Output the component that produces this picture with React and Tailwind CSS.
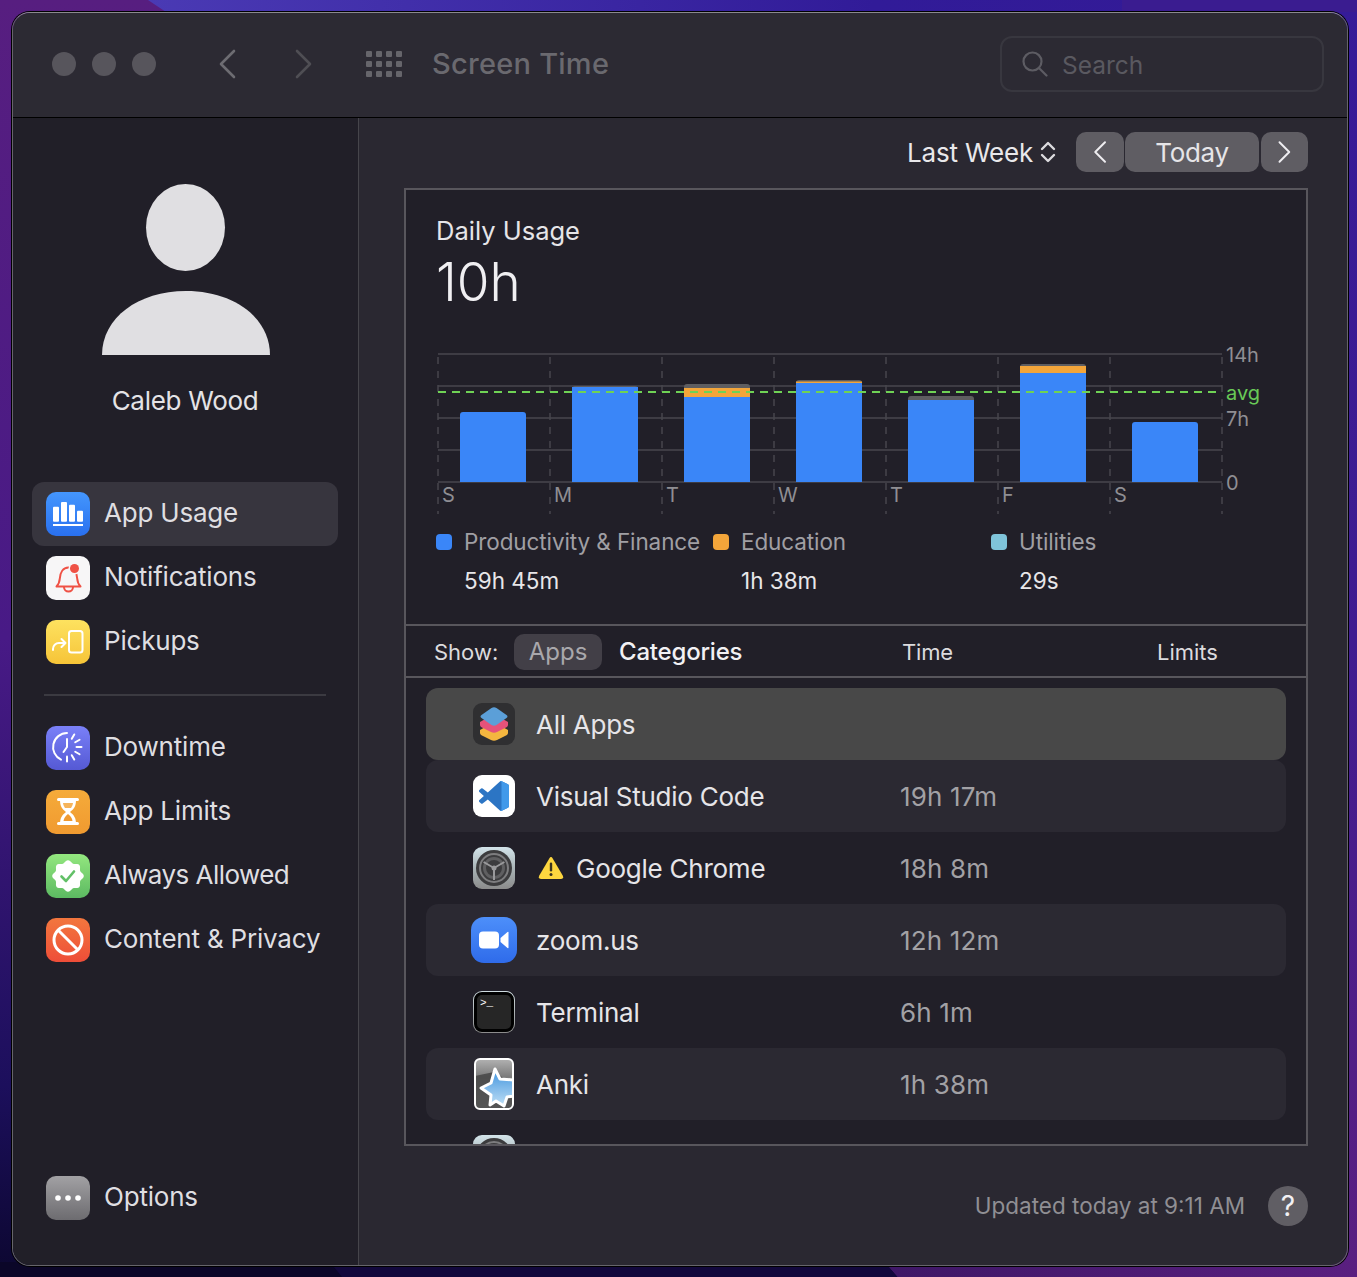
const font = { fontFamily: "Inter, 'Noto Sans', sans-serif" };

function Wallpaper() {
  return (
    <svg className="absolute inset-0" width="1357" height="1277" viewBox="0 0 1357 1277">
      <defs>
        <linearGradient id="wpTop" x1="0" x2="1" y1="0" y2="0">
          <stop offset="0" stopColor="#4a3ab4" />
          <stop offset="0.6" stopColor="#311b98" />
          <stop offset="1" stopColor="#341a96" />
        </linearGradient>
        <linearGradient id="wpLeft" x1="0" x2="0" y1="0" y2="1">
          <stop offset="0" stopColor="#571e80" />
          <stop offset="0.5" stopColor="#481a86" />
          <stop offset="0.85" stopColor="#1c0f5c" />
          <stop offset="1" stopColor="#0c0730" />
        </linearGradient>
        <linearGradient id="wpRight" x1="0" x2="0" y1="0" y2="1">
          <stop offset="0" stopColor="#351b98" />
          <stop offset="0.5" stopColor="#3f1c90" />
          <stop offset="1" stopColor="#5a1f80" />
        </linearGradient>
        <linearGradient id="wpBottom" x1="0" x2="1" y1="0" y2="0">
          <stop offset="0" stopColor="#3e1766" />
          <stop offset="1" stopColor="#5a1f80" />
        </linearGradient>
      </defs>
      <rect width="680" height="1277" fill="url(#wpLeft)" />
      <rect x="680" width="677" height="1277" fill="url(#wpRight)" />
      <path d="M148 0H1357V12H166Z" fill="url(#wpTop)" />
      <path d="M1122 0H1357V12H1122Z" fill="#3a1c90" />
      <path d="M0 1262H330L342 1277H0Z" fill="#0b0628" />
      <path d="M330 1262H885L898 1277H342Z" fill="#12083c" />
      <path d="M885 1262H1357V1277H898Z" fill="url(#wpBottom)" />
    </svg>
  );
}

function Chevron({ dir = "left", className = "", size = 24 }) {
  return (
    <svg width={size * 0.75} height={size + 8} viewBox="0 0 18 32" fill="none" stroke="currentColor" strokeWidth="2.6" strokeLinecap="round" strokeLinejoin="round" className={className}>
      {dir === "left" ? <path d="M16 3 3 16l13 13" /> : <path d="M2 3l13 13L2 29" />}
    </svg>
  );
}

function TitleBar() {
  return (
    <div className="flex h-[105px] shrink-0 items-center border-b border-black bg-[#2c2a33] pb-[3px] pl-[39px]">
      <div className="flex gap-4">
        <div className="h-6 w-6 rounded-full bg-[#57555c]" />
        <div className="h-6 w-6 rounded-full bg-[#57555c]" />
        <div className="h-6 w-6 rounded-full bg-[#57555c]" />
      </div>
      <Chevron className="ml-[62px] text-[#6d6c72]" />
      <Chevron dir="right" className="ml-[59px] text-[#4f4e54]" />
      <div className="ml-[53px] grid grid-cols-4 gap-x-[4px] gap-y-[4px]">
        {Array.from({ length: 12 }).map((_, i) => (
          <div key={i} className="h-[6px] w-[6px] rounded-[1px] bg-[#66656b]" />
        ))}
      </div>
      <div className="ml-[30px] text-[29px] font-medium tracking-[0.25px] text-[#6a696f]">Screen Time</div>
      <div className="ml-auto mr-[23px] flex h-[56px] w-[324px] items-center rounded-[12px] border-2 border-[#38373f] pl-[20px]">
        <svg width="26" height="26" viewBox="0 0 26 26" fill="none" stroke="#5d5c63" strokeWidth="2.2" strokeLinecap="round">
          <circle cx="10.5" cy="10.5" r="9" />
          <path d="m17 17 7.5 7.5" />
        </svg>
        <span className="ml-[14px] pt-[4px] text-[24.5px] text-[#5a5960]">Search</span>
      </div>
    </div>
  );
}

function Avatar() {
  return (
    <svg width="168" height="171" viewBox="0 0 168 171" className="ml-[70px] block shrink-0">
      <ellipse cx="83.5" cy="43.5" rx="39.5" ry="43.5" fill="#e0dfe2" />
      <path d="M0 171C0 134 36 107 84 107s84 27 84 64Z" fill="#e0dfe2" />
    </svg>
  );
}

function IconBox({ className, children }) {
  return (
    <div className={`flex h-11 w-11 shrink-0 items-center justify-center rounded-[10px] ${className}`}>
      <svg width="44" height="44" viewBox="0 0 44 44" fill="none">
        {children}
      </svg>
    </div>
  );
}

function UsageIcon() {
  return (
    <IconBox className="bg-linear-to-b from-[#4496fd] to-[#2a70ef]">
      <rect x="7" y="14.7" width="6" height="15" rx="1" fill="#fff" />
      <rect x="15" y="10" width="6" height="19.7" rx="1" fill="#fff" />
      <rect x="23" y="12.7" width="6" height="17" rx="1" fill="#fff" />
      <rect x="31" y="18.7" width="6" height="11" rx="1" fill="#fff" />
      <rect x="7" y="32" width="30" height="2" fill="#fff" />
    </IconBox>
  );
}

function NotifIcon() {
  return (
    <IconBox className="bg-[#f7f6f7]">
      <path d="M10.500 30.500h24c-2-2-3-4-3.300-8-.4-6-3.200-11-8.700-11s-8.300 5-8.700 11c-.3 4-1.300 6-3.300 8Z" stroke="#ef5145" strokeWidth="2" strokeLinejoin="round" />
      <path d="M18 31a4.500 4.500 0 0 0 9 0" stroke="#ef5145" strokeWidth="2" />
      <circle cx="28.500" cy="12.500" r="6" fill="#f7f6f7" />
      <circle cx="28.500" cy="12.500" r="4.500" fill="#ef5145" />
    </IconBox>
  );
}

function PickupIcon() {
  return (
    <IconBox className="bg-linear-to-b from-[#fde25f] to-[#f6c437]">
      <rect x="23" y="11" width="13.500" height="21.500" rx="2.500" stroke="#fff" strokeWidth="2" />
      <path d="M7 30v-1a6 6 0 0 1 6-6h6.500M15.500 19l4 4-4 4" stroke="#fff" strokeWidth="2" strokeLinecap="round" strokeLinejoin="round" />
    </IconBox>
  );
}

function DowntimeIcon() {
  const ticks = [30, 60, 90, 120, 150, 180].map((a) => {
    const r = (a * Math.PI) / 180;
    return {
      x1: 21 + Math.sin(r) * 9.500,
      y1: 21 - Math.cos(r) * 9.500,
      x2: 21 + Math.sin(r) * 14.500,
      y2: 21 - Math.cos(r) * 14.500,
    };
  });
  return (
    <IconBox className="bg-linear-to-b from-[#7a80f8] to-[#5559d4]">
      <path d="M21 7A14 14 0 0 0 15 33.600" stroke="#fff" strokeWidth="2" strokeLinecap="round" />
      <path d="M21 13v8l-3.500 5" stroke="#fff" strokeWidth="2" strokeLinecap="round" strokeLinejoin="round" />
      {ticks.map((t, i) => (
        <line key={i} {...t} stroke="#fff" strokeWidth="2" strokeLinecap="round" />
      ))}
    </IconBox>
  );
}

function LimitsIcon() {
  return (
    <IconBox className="bg-linear-to-b from-[#f5ab3a] to-[#f09a30]">
      <path d="M12.500 9.500h19M12.500 33.500h19" stroke="#fff" strokeWidth="3" strokeLinecap="round" />
      <path d="M14 10c0 6 2 9 6 12-4 3-6 6-6 12h16c0-6-2-9-6-12 4-3 6-6 6-12Z" fill="#fff" />
      <path d="M17.500 31c.3-3 2-5 4.500-7 2.500 2 4.200 4 4.500 7Z" fill="#f09a30" />
      <path d="M17 13h10c-.3 2-1 3.500-2 5h-6c-1-1.500-1.700-3-2-5Z" fill="#f6b45a" />
    </IconBox>
  );
}

function AllowedIcon() {
  const pts = [];
  for (let i = 0; i < 96; i++) {
    const a = (i / 96) * Math.PI * 2;
    const r = 14.500 + 1.300 * Math.cos(a * 8);
    pts.push(`${(22 + Math.sin(a) * r).toFixed(2)},${(22 - Math.cos(a) * r).toFixed(2)}`);
  }
  return (
    <IconBox className="bg-linear-to-b from-[#93e77f] to-[#5cba62]">
      <polygon points={pts.join(" ")} fill="#fff" />
      <path d="M15.500 22.500l4.500 4.500 8-9.500" stroke="#62c067" strokeWidth="2.600" strokeLinecap="round" strokeLinejoin="round" />
    </IconBox>
  );
}

function PrivacyIcon() {
  return (
    <IconBox className="bg-linear-to-b from-[#f2763e] to-[#ee4d38]">
      <circle cx="22" cy="22" r="14" stroke="#fff" strokeWidth="3" />
      <path d="m12 12 20 20" stroke="#fff" strokeWidth="3" />
    </IconBox>
  );
}

function OptionsIcon() {
  return (
    <IconBox className="bg-linear-to-b from-[#a2a1a4] to-[#6d6c70]">
      <circle cx="12" cy="22" r="2.800" fill="#fff" />
      <circle cx="22" cy="22" r="2.800" fill="#fff" />
      <circle cx="32" cy="22" r="2.800" fill="#fff" />
    </IconBox>
  );
}

function NavItem({ icon, label, active, className = "" }) {
  return (
    <div className={`flex h-16 items-center gap-[14px] rounded-[12px] pl-[14px] ${active ? "bg-[#37353e]" : ""}`}>
      {icon}
      <span className={`pb-1 text-[26px] text-[#dfdee1] ${className || "tracking-[-0.2px]"}`}>{label}</span>
    </div>
  );
}

function Sidebar() {
  return (
    <div className="flex w-[346px] shrink-0 flex-col border-r border-[#46454b] bg-[#211f28] pl-[19px] pr-5 pt-[66px]">
      <Avatar />
      <div className="mt-[30px] text-center text-[26px] leading-[32px] tracking-[-0.3px] text-[#e4e3e6]">Caleb Wood</div>
      <div className="mt-[65px]">
        <NavItem icon={<UsageIcon />} label="App Usage" active />
        <NavItem icon={<NotifIcon />} label="Notifications" />
        <NavItem icon={<PickupIcon />} label="Pickups" />
      </div>
      <div className="mx-3 my-5 h-[2px] shrink-0 bg-[#3b3a41]" />
      <div>
        <NavItem icon={<DowntimeIcon />} label="Downtime" />
        <NavItem icon={<LimitsIcon />} label="App Limits" />
        <NavItem icon={<AllowedIcon />} label="Always Allowed" className="tracking-[-0.55px]" />
        <NavItem icon={<PrivacyIcon />} label="Content & Privacy" />
      </div>
      <div className="mb-[35px] mt-auto">
        <NavItem icon={<OptionsIcon />} label="Options" />
      </div>
    </div>
  );
}

const bars = [
  { x: 460, top: 412 },
  { x: 572, top: 387, gray: 386 },
  { x: 684, top: 397, gray: 384, orange: 388 },
  { x: 796, top: 383, gray: 380, orange: 381.500 },
  { x: 908, top: 400, gray: 396 },
  { x: 1020, top: 373, gray: 364, orange: 366 },
  { x: 1132, top: 422 },
];
const days = ["S", "M", "T", "W", "T", "F", "S"];

function Chart() {
  const ox = 436;
  const oy = 344;
  return (
    <svg width="840" height="172" viewBox={`${ox} ${oy} 840 172`} className="block" style={font}>
      {[354, 386, 418, 450, 482].map((y) => (
        <line key={y} x1="438" x2="1222" y1={y} y2={y} stroke="#3e3c44" strokeWidth="2" />
      ))}
      {[438, 550, 662, 774, 886, 998, 1110, 1222].map((x) => (
        <line key={x} x1={x} x2={x} y1="357" y2="514" stroke="#47454c" strokeWidth="1.500" strokeDasharray="7 7" />
      ))}
      {bars.map((b, i) => (
        <g key={i}>
          {b.gray && <path d={`M${b.x} 400V${b.gray + 3}q0-3 3-3h60q3 0 3 3V400Z`} fill="#5e5d60" />}
          {b.orange && <rect x={b.x} y={b.orange} width="66" height={b.top - b.orange} fill="#f3a53a" />}
          {b.gray ? (
            <rect x={b.x} y={b.top} width="66" height={482 - b.top} fill="#3a86f8" />
          ) : (
            <path d={`M${b.x} 482V${b.top + 3}q0-3 3-3h60q3 0 3 3V482Z`} fill="#3a86f8" />
          )}
        </g>
      ))}
      <line x1="438" x2="1218" y1="392" y2="392" stroke="#6fd255" strokeWidth="2" strokeDasharray="8 6" />
      {days.map((d, i) => (
        <text key={i} x={442 + i * 112} y="502" fontSize="20" fill="#8f8e93">
          {d}
        </text>
      ))}
      <text x="1226" y="362" fontSize="20" fill="#8f8e93">14h</text>
      <text x="1226" y="400" fontSize="20" fill="#69c957">avg</text>
      <text x="1226" y="426" fontSize="20" fill="#8f8e93">7h</text>
      <text x="1226" y="490" fontSize="20" fill="#8f8e93">0</text>
    </svg>
  );
}

function LegendItem({ color, label, value }) {
  return (
    <div>
      <div className="flex items-center gap-3 whitespace-nowrap">
        <div className={`h-4 w-4 rounded-[4px] ${color}`} />
        <span className="text-[22.500px] leading-[28px] tracking-[-0.1px] text-[#a09fa4]">{label}</span>
      </div>
      <div className="mt-[11px] pl-7 text-[22.500px] leading-[28px] text-[#e7e6e9]">{value}</div>
    </div>
  );
}

function AllAppsIcon() {
  return (
    <div className="flex h-[42px] w-[42px] items-center justify-center rounded-[9px] bg-[#2f2f31]">
      <svg width="42" height="42" viewBox="0 0 42 42">
        <path d="M21 19 35 27v3q0 1.500-1.500 2.300L24 37q-3 1.500-6 0l-9.500-4.700Q7 31.500 7 30v-3Z" fill="#f4b63f" />
        <path d="M21 11 35 19v3q0 1.500-1.500 2.300L24 29q-3 1.500-6 0l-9.500-4.700Q7 23.500 7 22v-3Z" fill="#e6527a" />
        <path d="M18.500 5q2.500-1.500 5 0l10 7q2 1.500 0 3l-10 7q-2.500 1.500-5 0l-10-7q-2-1.500 0-3Z" fill="#5b9fd8" />
      </svg>
    </div>
  );
}

function VsCodeIcon() {
  return (
    <div className="flex h-[42px] w-[42px] items-center justify-center rounded-[9px] bg-white">
      <svg width="30" height="30" viewBox="0 0 100 100">
        <path d="M70.900 99.300a6.200 6.200 0 0 0 5-.2l20.600-9.900A6.250 6.250 0 0 0 100 83.600V16.400a6.250 6.250 0 0 0-3.500-5.600L75.900.9a6.200 6.200 0 0 0-7.100 1.200L29.400 38 12.200 25a4.200 4.200 0 0 0-5.300.2L1.400 30.200a4.200 4.200 0 0 0 0 6.200L16.300 50 1.400 63.600a4.200 4.200 0 0 0 0 6.200l5.500 5a4.200 4.200 0 0 0 5.300.2L29.400 62l39.400 35.900a6.200 6.200 0 0 0 2.100 1.400ZM75 27.300 45.100 50 75 72.700Z" fill="#2c75c4" />
        <path d="M71 99.300a6.200 6.200 0 0 0 4.900-.2l20.600-9.900A6.250 6.250 0 0 0 100 83.600V16.400a6.250 6.250 0 0 0-3.500-5.600L75.900.9a6.200 6.200 0 0 0-4.900-.2c2.500 1 4 3.200 4 5.600v87.400c0 2.400-1.500 4.600-4 5.600Z" fill="#4199ea" />
      </svg>
    </div>
  );
}

function GearIcon() {
  return (
    <div className="flex h-[42px] w-[42px] shrink-0 items-center justify-center rounded-[9px] bg-linear-to-b from-[#d3e4ea] via-[#a9b4b7] to-[#8b8b8b]">
      <svg width="38" height="38" viewBox="0 0 38 38" fill="none">
        <circle cx="19" cy="19" r="18" fill="#3c3c3e" />
        <circle cx="19" cy="19" r="14" stroke="#7d7d7f" strokeWidth="2" />
        <circle cx="19" cy="19" r="9.500" stroke="#5f5f61" strokeWidth="3" />
        <path d="M19 19V31M19 19 8.600 13M19 19 29.400 13" stroke="#9a9a9c" strokeWidth="2" />
        <circle cx="19" cy="19" r="2.500" fill="#9a9a9c" />
      </svg>
    </div>
  );
}

function ZoomIcon() {
  return (
    <div className="flex h-[46px] w-[46px] items-center justify-center rounded-[13px] bg-linear-to-b from-[#4d8ffa] to-[#2f6bea]">
      <svg width="30" height="18" viewBox="0 0 30 18">
        <rect width="20" height="17" y="0.500" rx="4" fill="#fff" />
        <path d="M21.500 7 28.500 1Q29.500.5 29.500 1.500V16.500Q29.500 17.500 28.500 17L21.500 11Z" fill="#fff" />
      </svg>
    </div>
  );
}

function TerminalIcon() {
  return (
    <div className="h-[42px] w-[42px] rounded-[9px] bg-linear-to-b from-[#cfdce0] to-[#8b8b8b] p-[1px]">
      <div className="h-full w-full rounded-[8px] border-[3px] border-black bg-[#262626] pl-[3px] pt-[1px]">
        <svg width="18" height="13" viewBox="0 0 18 13" className="block">
          <text x="0" y="10" fontSize="11" fill="#fff" fontFamily="Liberation Mono, monospace">&gt;_</text>
        </svg>
      </div>
    </div>
  );
}

function AnkiIcon() {
  return (
    <svg width="40" height="52" viewBox="0 0 40 52" className="block">
      <defs>
        <linearGradient id="ankiBg" x1="0" x2="0" y1="0" y2="1">
          <stop offset="0" stopColor="#b2b2b2" />
          <stop offset="0.35" stopColor="#7c7c7c" />
          <stop offset="1" stopColor="#9a9a9a" />
        </linearGradient>
        <linearGradient id="ankiStar" x1="0" x2="0" y1="0" y2="1">
          <stop offset="0" stopColor="#3f93de" />
          <stop offset="1" stopColor="#bfdff5" />
        </linearGradient>
        <clipPath id="ankiClip">
          <rect x="1" y="1" width="38" height="50" rx="5" />
        </clipPath>
      </defs>
      <rect x="1" y="1" width="38" height="50" rx="5" fill="url(#ankiBg)" />
      <g clipPath="url(#ankiClip)">
        <path d="M1 18 20 14 39 26V51H1Z" fill="#3e3e3e" opacity="0.75" />
        <path d="M21 11 26 21 40 22V38L33 39 30 48 22 43 16 47 17 37 7 30 17 25Z" fill="url(#ankiStar)" stroke="#fff" strokeWidth="3" strokeLinejoin="round" />
      </g>
      <rect x="1" y="1" width="38" height="50" rx="5" fill="none" stroke="#fff" strokeWidth="2" />
    </svg>
  );
}

function WarnIcon() {
  return (
    <svg width="26" height="24" viewBox="0 0 26 24" className="ml-[2px] mr-[12px] shrink-0">
      <path d="M11.300 2.500q1.700-2.800 3.400 0l10 17q1.500 3-1.700 3.500H3q-3.200-.5-1.700-3.500Z" fill="#fdd63f" />
      <rect x="11.800" y="6.500" width="2.400" height="9" rx="1.200" fill="#3a3320" />
      <circle cx="13" cy="18.500" r="1.500" fill="#3a3320" />
    </svg>
  );
}

function AppRow({ icon, name, time, warn, className = "" }) {
  return (
    <div className={`flex h-[72px] shrink-0 items-center rounded-[12px] ${className}`}>
      <div className="ml-[45px] mr-[19px] flex w-[46px] shrink-0 justify-center">{icon}</div>
      <div className="flex w-[364px] shrink-0 items-center whitespace-nowrap text-[26px] tracking-[-0.25px] text-[#e6e5e8]">
        {warn && <WarnIcon />}
        {name}
      </div>
      <div className="text-[26px] tracking-[0.15px] text-[#a2a1a5]">{time}</div>
    </div>
  );
}

function Panel() {
  return (
    <div className="flex h-[958px] flex-col border-2 border-[#58565c] bg-[#211f28]">
      <div className="h-[434px] shrink-0 pl-[30px] pt-[25px]">
        <div className="text-[25.500px] leading-[32px] text-[#e6e5e8]">Daily Usage</div>
        <div className="mt-[4px] text-[53px] font-light leading-[62px] text-[#f0eff2]">10h</div>
        <div className="mt-[31px]">
          <Chart />
        </div>
        <div className="mt-[-1px] grid grid-cols-[277px_278px_1fr] pt-[13px]">
          <LegendItem color="bg-[#3a86f8]" label="Productivity & Finance" value="59h 45m" />
          <LegendItem color="bg-[#f3a53a]" label="Education" value="1h 38m" />
          <LegendItem color="bg-[#7fc4da]" label="Utilities" value="29s" />
        </div>
      </div>
      <div className="flex h-[54px] shrink-0 items-center border-y-2 border-[#58565c] pl-[28px] pt-[2px]">
        <span className="w-[80px] text-[22px] text-[#dcdbde]">Show:</span>
        <div className="flex h-9 w-[88px] items-center justify-center rounded-[10px] bg-[#423f47] text-[24px] text-[#a9a8ac]">Apps</div>
        <span className="ml-[17px] w-[283px] text-[24px] font-medium tracking-[-0.2px] text-[#f2f1f4]">Categories</span>
        <span className="w-[255px] text-[22px] tracking-[-0.2px] text-[#dcdbde]">Time</span>
        <span className="text-[22px] text-[#dcdbde]">Limits</span>
      </div>
      <div className="flex flex-1 flex-col overflow-hidden px-5 pt-[10px]">
        <AppRow icon={<AllAppsIcon />} name="All Apps" className="bg-[#484848]" />
        <AppRow icon={<VsCodeIcon />} name="Visual Studio Code" time="19h 17m" className="bg-[#2b2932]" />
        <AppRow icon={<GearIcon />} name="Google Chrome" time="18h 8m" warn />
        <AppRow icon={<ZoomIcon />} name="zoom.us" time="12h 12m" className="bg-[#2b2932]" />
        <AppRow icon={<TerminalIcon />} name="Terminal" time="6h 1m" />
        <AppRow icon={<AnkiIcon />} name="Anki" time="1h 38m" className="bg-[#2b2932]" />
        <AppRow icon={<GearIcon />} />
      </div>
    </div>
  );
}

function Toolbar() {
  return (
    <div className="flex h-[70px] items-center justify-end pb-[2px]">
      <span className="text-[26px] tracking-[-0.2px] text-[#e9e8eb]">Last Week</span>
      <svg width="16" height="24" viewBox="0 0 16 24" fill="none" stroke="#dcdbde" strokeWidth="2.400" strokeLinecap="round" strokeLinejoin="round" className="ml-[7px]">
        <path d="M2 9l6-6 6 6M2 15l6 6 6-6" />
      </svg>
      <div className="ml-[20px] flex gap-[1px]">
        <div className="flex h-10 w-12 items-center justify-center rounded-[10px] bg-[#5f5d63] text-[#eeedf0]">
          <Chevron size={18} />
        </div>
        <div className="flex h-10 w-[134px] items-center justify-center rounded-[10px] bg-[#5f5d63] text-[26px] tracking-[-0.3px] text-[#e6e5e8]">Today</div>
        <div className="ml-[1px] flex h-10 w-[47px] items-center justify-center rounded-[10px] bg-[#5f5d63] text-[#eeedf0]">
          <Chevron dir="right" size={18} />
        </div>
      </div>
    </div>
  );
}

export default function App() {
  return (
    <div className="relative h-[1277px] w-[1357px] overflow-hidden p-3" style={font}>
      <Wallpaper />
      <div className="relative flex h-[1254px] w-[1336px] flex-col overflow-hidden rounded-[18px] border border-[#66656b] border-t-[#8a898e] shadow-[0_0_0_1px_#000]">
        <TitleBar />
        <div className="flex min-h-0 flex-1">
          <Sidebar />
          <div className="flex flex-1 flex-col bg-[#2a2831] pl-[45px] pr-[39px]">
            <Toolbar />
            <Panel />
            <div className="flex flex-1 items-start justify-end pt-[40px]">
              <span className="mr-[23px] mt-[6px] text-[22.500px] leading-[28px] text-[#908f94]">Updated today at 9:11 AM</span>
              <div className="flex h-10 w-10 items-center justify-center rounded-full bg-[#605e64] text-[28px] text-[#f2f1f4]">?</div>
            </div>
          </div>
        </div>
      </div>
    </div>
  );
}
